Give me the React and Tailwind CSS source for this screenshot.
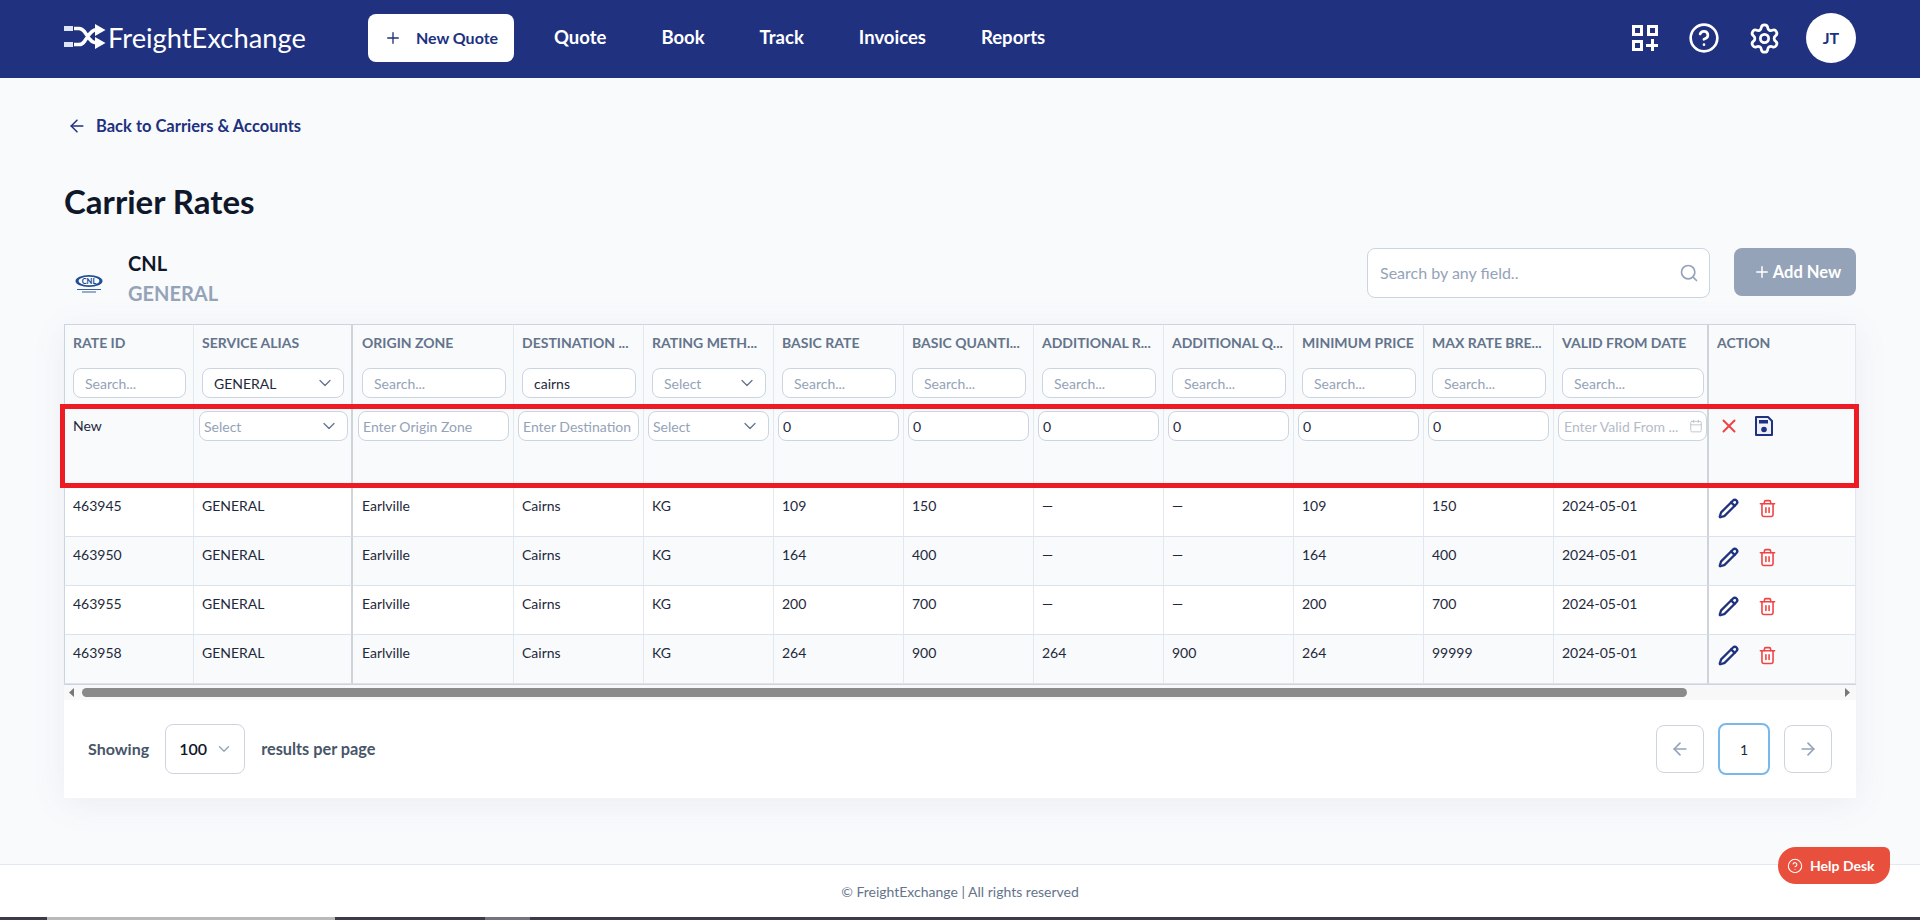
import React from "react";
import { Plus, CircleHelp, Settings, ArrowLeft, ArrowRight, Search, ChevronDown, X, Calendar, Pencil, Trash2 } from "lucide-react";

const colWidths = ["w-[130px]","w-[159px]","w-[161px]","w-[130px]","w-[130px]","w-[130px]","w-[130px]","w-[130px]","w-[130px]","w-[130px]","w-[130px]","w-[155px]","w-[147px]"];
const heads = ["RATE ID","SERVICE ALIAS","ORIGIN ZONE","DESTINATION ...","RATING METH...","BASIC RATE","BASIC QUANTI...","ADDITIONAL R...","ADDITIONAL Q...","MINIMUM PRICE","MAX RATE BRE...","VALID FROM DATE","ACTION"];
const rows = [
  ["463945","GENERAL","Earlville","Cairns","KG","109","150","—","—","109","150","2024-05-01"],
  ["463950","GENERAL","Earlville","Cairns","KG","164","400","—","—","164","400","2024-05-01"],
  ["463955","GENERAL","Earlville","Cairns","KG","200","700","—","—","200","700","2024-05-01"],
  ["463958","GENERAL","Earlville","Cairns","KG","264","900","264","900","264","99999","2024-05-01"],
];

const edge = (i) =>
  i === 1 || i === 11 ? "border-r-2 border-r-[#cfd3da]" : "border-r border-r-[#e2e8f0]";

function Field({ placeholder, value }) {
  return (
    <input
      readOnly
      value={value || ""}
      placeholder={placeholder}
      className="w-full h-[30px] min-w-0 rounded-[8px] border border-[#cbd5e1] bg-white px-[11px] text-[14px] text-[#1e293b] placeholder:text-[#94a3b8] outline-none"
    />
  );
}

function RowField({ placeholder, value }) {
  return (
    <input
      readOnly
      value={value || ""}
      placeholder={placeholder}
      className="w-full h-[30px] min-w-0 rounded-[8px] border border-[#cbd5e1] bg-white px-[4px] text-[14px] text-[#1e293b] placeholder:text-[#94a3b8] outline-none"
    />
  );
}

function Pick({ text, dark, compact }) {
  return (
    <div className={`flex h-[30px] items-center justify-between rounded-[8px] border border-[#cbd5e1] bg-white text-[14px] ${compact ? "pl-[4px] pr-[8px]" : "pl-[11px] pr-[8px]"} ${dark ? "text-[#1e293b]" : "text-[#94a3b8]"}`}>
      <span>{text}</span>
      <ChevronDown size={20} strokeWidth={1.5} className="text-[#64748b]" />
    </div>
  );
}

function GridPlus() {
  return (
    <svg width="28" height="28" viewBox="0 0 28 28" fill="none" stroke="white" strokeWidth="3">
      <rect x="2.5" y="2.5" width="8" height="8" />
      <rect x="17.5" y="2.5" width="8" height="8" />
      <rect x="2.5" y="17.5" width="8" height="8" />
      <path d="M21.5 15v12M15 21.5h12" />
    </svg>
  );
}

function ShuffleLogo() {
  return (
    <svg width="42" height="26" viewBox="0 0 42 26" fill="none" className="shrink-0">
      <rect x="0" y="2" width="9" height="5" fill="#dfe4f2" />
      <rect x="0" y="18" width="9" height="5" fill="#dfe4f2" />
      <path d="M10 4.500h5c2.500 0 3.800 1 5.500 3.200l4.500 6.600c1.700 2.200 3 3.700 5.500 4.200h3M10 20.500h5c2.500 0 3.800-1 5.500-3.200l4.500-6.600c1.700-2.200 3-4 5.500-4.700h3" stroke="white" strokeWidth="3.600" />
      <path d="M31 0 41.500 6 31 12zM31 13 41.500 19 31 25z" fill="white" />
    </svg>
  );
}

function CnlLogo() {
  return (
    <svg width="28" height="18" viewBox="0 0 28 18" className="shrink-0">
      <ellipse cx="14" cy="6" rx="13.500" ry="6" fill="#1f4e96" />
      <ellipse cx="14" cy="6" rx="10.500" ry="4.200" fill="white" />
      <text x="14" y="8.700" textAnchor="middle" fontSize="7.500" fontWeight="900" fill="#1f4e96" fontFamily="Lato, sans-serif">CNL</text>
      <path d="M2 14.500h24M7 17h14" stroke="#3b5f9c" strokeWidth="1" />
    </svg>
  );
}

function Floppy() {
  return (
    <svg width="18" height="20" viewBox="0 0 18 20" fill="none">
      <path d="M1 1h12l4 4v14H1z" fill="#eef1f8" stroke="#20317f" strokeWidth="2" strokeLinejoin="round" />
      <rect x="4" y="4" width="9" height="3.500" fill="#20317f" />
      <circle cx="9" cy="13.500" r="2.800" fill="#20317f" />
    </svg>
  );
}

export default function App() {
  return (
    <div className="relative flex h-[920px] flex-col overflow-hidden bg-[#f9fafc] [font-family:Lato,sans-serif] text-[#1e293b]">
      <header className="flex h-[78px] shrink-0 items-center bg-[#20317f] pb-[2px] pl-[64px] pr-[64px] text-white">
        <div className="flex w-[304px] items-center gap-[2px] pb-[1px]">
          <ShuffleLogo />
          <span className="text-[27.300px] font-normal leading-none">FreightExchange</span>
        </div>
        <button className="flex h-[48px] w-[146px] items-center justify-center gap-[14px] rounded-[8px] bg-white text-[16px] font-bold text-[#20317f]">
          <Plus size={18} strokeWidth={1.8} />
          New Quote
        </button>
        <nav className="ml-[40px] flex items-center gap-[55px] text-[18.500px] font-bold">
          <span>Quote</span>
          <span>Book</span>
          <span>Track</span>
          <span>Invoices</span>
          <span>Reports</span>
        </nav>
        <div className="ml-auto flex items-center">
          <GridPlus />
          <CircleHelp size={32} strokeWidth={2} className="ml-[29px]" />
          <Settings size={33} strokeWidth={2} className="ml-[28px]" />
          <div className="ml-[25px] flex h-[50px] w-[50px] items-center justify-center rounded-full bg-white text-[16px] font-bold text-[#20317f]">JT</div>
        </div>
      </header>

      <main className="flex-1 px-[64px]">
        <div className="mt-[38px] flex h-[20px] items-center gap-[9px] pl-[3px] text-[16.500px] font-bold text-[#20317f]">
          <ArrowLeft size={20} strokeWidth={1.8} />
          <span>Back to Carriers &amp; Accounts</span>
        </div>
        <h1 className="mt-[45px] h-[40px] text-[33px] font-bold leading-[40px] text-[#0f172a]">Carrier Rates</h1>

        <div className="mt-[27px] mb-[15px] flex h-[61px] items-start justify-between">
          <div className="flex items-center">
            <div className="ml-[11px] mt-[12px] flex w-[53px] items-center"><CnlLogo /></div>
            <div className="flex flex-col">
              <span className="h-[30px] text-[20px] font-bold leading-[30px] text-[#0f172a]">CNL</span>
              <span className="h-[30px] text-[20px] font-bold leading-[30px] text-[#94a3b8]">GENERAL</span>
            </div>
          </div>
          <div className="flex items-start gap-[24px]">
            <div className="flex h-[50px] w-[343px] items-center justify-between rounded-[8px] border border-[#cbd5e1] bg-white pl-[12px] pr-[10px] text-[16px] text-[#94a3b8]">
              <span>Search by any field..</span>
              <Search size={20} strokeWidth={2} />
            </div>
            <button className="flex h-[48px] w-[122px] items-center justify-center gap-[2px] rounded-[8px] bg-[#94a3b8] pl-[4px] text-[16.500px] font-bold text-white">
              <Plus size={18} strokeWidth={2} />
              Add New
            </button>
          </div>
        </div>

        <section className="bg-white shadow-[0_6px_32px_rgba(100,116,139,0.09)]">
          <table className="w-full table-fixed border-separate border-spacing-0 text-[14px]">
            <colgroup>
              {colWidths.map((w, i) => <col key={i} className={w} />)}
            </colgroup>
            <thead>
              <tr className="bg-[#f8fafc]">
                {heads.map((h, i) => (
                  <th key={h} className={`h-[80px] border-t border-t-[#cbd5e1] pl-[8px] pt-[8px] pb-[5px] align-top text-left font-bold ${i === 11 ? "pr-[3px]" : "pr-[7px]"} ${edge(i)} ${i === 0 ? "border-l border-l-[#cbd5e1]" : ""} ${i === 2 ? "pl-[9px]" : ""}`}>
                    <div className="h-[20px] whitespace-nowrap text-[14px] leading-[20px] text-[#64748b]">{h}</div>
                    <div className="mt-[15px] font-normal">
                      {i === 1 ? <Pick text="GENERAL" dark /> :
                       i === 4 ? <Pick text="Select" /> :
                       i === 3 ? <Field value="cairns" /> :
                       i === 12 ? null : <Field placeholder="Search..." />}
                    </div>
                  </th>
                ))}
              </tr>
            </thead>
            <tbody>
              <tr className="bg-[#f8fafc]">
                <td className={`h-[84px] pl-[8px] pr-[4px] pt-[11px] align-top ${edge(0)} border-l border-l-[#cbd5e1]`}>New</td>
                <td className={`pl-[5px] pr-[3px] pt-[7px] align-top ${edge(1)}`}><Pick text="Select" compact /></td>
                <td className={`pl-[5px] pr-[4px] pt-[7px] align-top ${edge(2)}`}><RowField placeholder="Enter Origin Zone" /></td>
                <td className={`pl-[4px] pr-[4px] pt-[7px] align-top ${edge(3)}`}><RowField placeholder="Enter Destination" /></td>
                <td className={`pl-[4px] pr-[4px] pt-[7px] align-top ${edge(4)}`}><Pick text="Select" compact /></td>
                {[5,6,7,8,9,10].map((i) => (
                  <td key={i} className={`pl-[4px] pr-[4px] pt-[7px] align-top ${edge(i)}`}><RowField value="0" /></td>
                ))}
                <td className={`pl-[4px] pt-[7px] align-top ${edge(11)}`}>
                  <div className="flex h-[30px] items-center justify-between rounded-[8px] border border-[#cbd5e1] bg-white pl-[5px] pr-[3px] text-[14px] text-[#b4bcc8]">
                    <span className="whitespace-nowrap">Enter Valid From ...</span>
                    <Calendar size={14} strokeWidth={1.4} className="shrink-0" />
                  </div>
                </td>
                <td className="border-r border-r-[#e2e8f0] pl-[9px] pt-[11px] align-top">
                  <div className="flex items-center gap-[15px]">
                    <X size={22} strokeWidth={2.2} className="text-[#ef4444]" />
                    <Floppy />
                  </div>
                </td>
              </tr>
              {rows.map((r, ri) => (
                <tr key={r[0]} className={ri % 2 ? "bg-[#f8fafc]" : "bg-white"}>
                  {r.map((c, i) => (
                    <td key={i} className={`h-[49px] border-b border-b-[#dbe2ec] pl-[8px] pr-[7px] pt-[8px] align-top leading-[20px] ${edge(i)} ${i === 0 ? "border-l border-l-[#cbd5e1]" : ""} ${i === 2 ? "pl-[9px]" : ""}`}>{c}</td>
                  ))}
                  <td className="border-b border-b-[#dbe2ec] border-r border-r-[#e2e8f0] pl-[9px] pt-[10px] align-top">
                    <div className="flex items-center gap-[19px]">
                      <Pencil size={21} strokeWidth={2.600} className="text-[#20317f]" />
                      <Trash2 size={19} strokeWidth={2} className="text-[#ef4444]" />
                    </div>
                  </td>
                </tr>
              ))}
            </tbody>
          </table>

          <div className="flex h-[16px] items-center border-t border-t-[#cbd5e1] bg-[#f8f8f8]">
            <svg width="5" height="9" viewBox="0 0 5 9" className="ml-[5px]"><path d="M5 0v9L0 4.500z" fill="#777" /></svg>
            <div className="ml-[8px] h-[9px] w-[1605px] rounded-full bg-[#8a8a8a]"></div>
            <svg width="5" height="9" viewBox="0 0 5 9" className="ml-auto mr-[6px]"><path d="M0 0v9l5-4.500z" fill="#777" /></svg>
          </div>

          <div className="flex h-[98px] items-center pl-[24px] pr-[24px] text-[16px] font-bold text-[#475569]">
            <span>Showing</span>
            <div className="ml-[16px] flex h-[50px] w-[80px] items-center justify-between rounded-[8px] border border-[#cbd5e1] pl-[13px] pr-[11px] font-semibold text-[#0f172a]">
              <span>100</span>
              <ChevronDown size={18} strokeWidth={1.8} className="text-[#94a3b8]" />
            </div>
            <span className="ml-[16px] text-[16.300px]">results per page</span>
            <div className="ml-auto flex items-center">
              <div className="flex h-[48px] w-[48px] items-center justify-center rounded-[8px] border border-[#cbd5e1] text-[#94a3b8]"><ArrowLeft size={20} strokeWidth={2} /></div>
              <div className="ml-[14px] flex h-[52px] w-[52px] items-center justify-center rounded-[8px] border-2 border-[#7ab8ec] text-[14px] font-normal text-[#1e293b]">1</div>
              <div className="ml-[14px] flex h-[48px] w-[48px] items-center justify-center rounded-[8px] border border-[#cbd5e1] text-[#94a3b8]"><ArrowRight size={20} strokeWidth={2} /></div>
            </div>
          </div>
        </section>
      </main>

      <footer className="flex h-[53px] shrink-0 items-center justify-center border-t border-t-[#e2e8f0] bg-white text-[14px] text-[#64748b]">
        © FreightExchange | All rights reserved
      </footer>
      <div className="flex h-[3px] shrink-0 bg-[#3f3a4a]">
        <div className="ml-[47px] h-full w-[288px] bg-[#b9b9b9]"></div>
        <div className="ml-[150px] h-full w-[45px] bg-[#77727f]"></div>
      </div>

      <div className="absolute left-[60px] top-[404px] h-[84px] w-[1799px] border-[5px] border-[#ed1c24]"></div>

      <div className="absolute left-[1778px] top-[847px] flex h-[37px] w-[112px] items-center gap-[7px] rounded-[18px] rounded-tr-[6px] bg-[#e94f3d] pl-[9px] text-[14px] font-bold text-white">
        <CircleHelp size={16} strokeWidth={1.6} />
        Help Desk
      </div>
    </div>
  );
}
